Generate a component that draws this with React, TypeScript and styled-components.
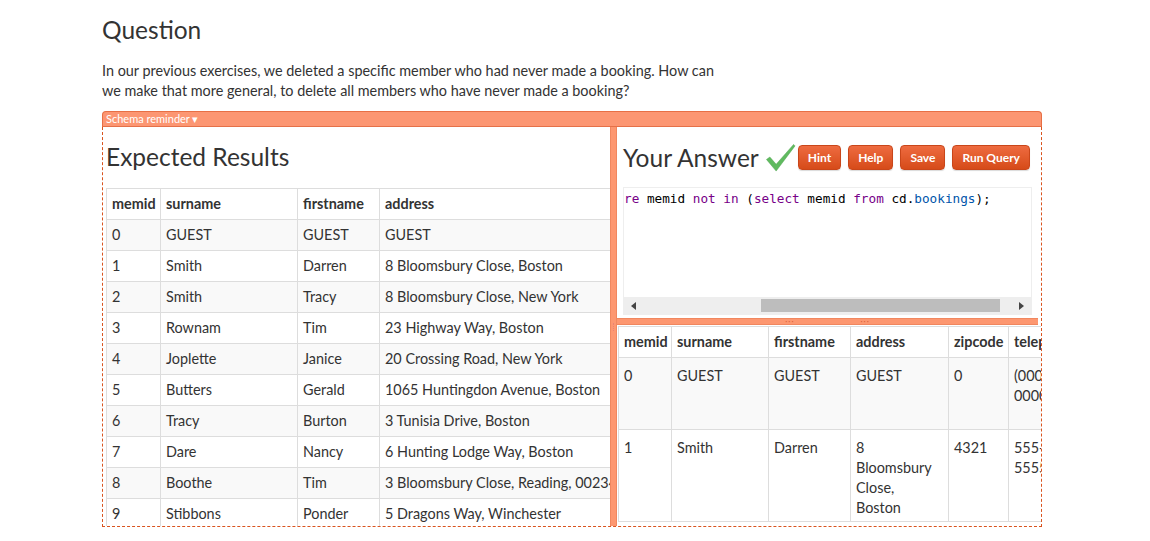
import styled, { createGlobalStyle } from "styled-components";

const GlobalStyle = createGlobalStyle`
  body {
    margin: 0;
    background: #fff;
    font-family: Lato, "Open Sans", sans-serif;
    color: #333;
  }
`;

const expected = [
  ["0", "GUEST", "GUEST", "GUEST"],
  ["1", "Smith", "Darren", "8 Bloomsbury Close, Boston"],
  ["2", "Smith", "Tracy", "8 Bloomsbury Close, New York"],
  ["3", "Rownam", "Tim", "23 Highway Way, Boston"],
  ["4", "Joplette", "Janice", "20 Crossing Road, New York"],
  ["5", "Butters", "Gerald", "1065 Huntingdon Avenue, Boston"],
  ["6", "Tracy", "Burton", "3 Tunisia Drive, Boston"],
  ["7", "Dare", "Nancy", "6 Hunting Lodge Way, Boston"],
  ["8", "Boothe", "Tim", "3 Bloomsbury Close, Reading, 00234"],
  ["9", "Stibbons", "Ponder", "5 Dragons Way, Winchester"],
];

const answer = [
  {
    height: 71,
    cells: ["0", "GUEST", "GUEST", "GUEST", "0", "(000) 000-0000", "", "2012-07-01 00:00:00"],
  },
  {
    height: 91,
    cells: ["1", "Smith", "Darren", "8 Bloomsbury Close, Boston", "4321", "555-555-5555", "", "2012-07-02 12:02:05"],
  },
];

const leftCols = [54, 137, 82, 300];
const rightCols = [53, 97, 82, 98, 60, 90, 120, 90];

const App = () => {
  return (
    <>
      <GlobalStyle />
      <Page>
        <Title>Question</Title>
        <Intro>
          In our previous exercises, we deleted a specific member who had never made a booking. How can
          <br />
          we make that more general, to delete all members who have never made a booking?
        </Intro>
        <SchemaBar>Schema reminder ▾</SchemaBar>
        <Workspace>
          <LeftPane>
            <PaneTitle>Expected Results</PaneTitle>
            <Table>
              <colgroup>
                {leftCols.map((w, i) => (
                  <col key={i} style={{ width: w }} />
                ))}
              </colgroup>
              <thead>
                <tr>
                  <Th>memid</Th>
                  <Th>surname</Th>
                  <Th>firstname</Th>
                  <Th>address</Th>
                </tr>
              </thead>
              <tbody>
                {expected.map((row, i) => (
                  <Tr key={i} $striped={i % 2 === 0}>
                    {row.map((cell, j) => (
                      <Td key={j}>{cell}</Td>
                    ))}
                  </Tr>
                ))}
              </tbody>
            </Table>
          </LeftPane>
          <VSplitter>
            <Grip />
          </VSplitter>
          <RightPane>
            <AnswerHeader>
              <PaneTitle as="span">Your Answer</PaneTitle>
              <Check viewBox="0 0 32 32">
                <path
                  d="M1.5 18 L5 15.5 L11.5 23 L29.5 2.5 L31 4 L11.5 30 Z"
                  fill="#5fba5f"
                  stroke="#4fa44f"
                  strokeWidth="0.5"
                  strokeLinejoin="round"
                />
              </Check>
              <Button>Hint</Button>
              <Button>Help</Button>
              <Button>Save</Button>
              <Button>Run Query</Button>
            </AnswerHeader>
            <Editor>
              <CodeLine>
                <Kw>re</Kw> memid <Kw>not</Kw> <Kw>in</Kw> (<Kw>select</Kw> memid <Kw>from</Kw> cd.
                <Var>bookings</Var>);
              </CodeLine>
              <ScrollBar>
                <Arrow viewBox="0 0 8 10">
                  <path d="M6 1 L1 5 L6 9 Z" fill="#444" />
                </Arrow>
                <Track>
                  <Thumb />
                </Track>
                <Arrow viewBox="0 0 8 10">
                  <path d="M2 1 L7 5 L2 9 Z" fill="#444" />
                </Arrow>
              </ScrollBar>
            </Editor>
            <HSplitter>
              <Dots>···</Dots>
              <Dots>···</Dots>
            </HSplitter>
            <ResultWrap>
              <Table $wide>
                <colgroup>
                  {rightCols.map((w, i) => (
                    <col key={i} style={{ width: w }} />
                  ))}
                </colgroup>
                <thead>
                  <tr>
                    <Th>memid</Th>
                    <Th>surname</Th>
                    <Th>firstname</Th>
                    <Th>address</Th>
                    <Th>zipcode</Th>
                    <Th>telephone</Th>
                    <Th>recommendedby</Th>
                    <Th>joindate</Th>
                  </tr>
                </thead>
                <tbody>
                  {answer.map((row, i) => (
                    <Tr key={i} $striped={i % 2 === 0} style={{ height: row.height }}>
                      {row.cells.map((cell, j) => (
                        <Td key={j} $wrap>
                          {cell}
                        </Td>
                      ))}
                    </Tr>
                  ))}
                </tbody>
              </Table>
            </ResultWrap>
          </RightPane>
        </Workspace>
      </Page>
    </>
  );
};

export default App;

const Page = styled.div`
  width: 940px;
  padding: 14px 0 0 102px;
`;

const Title = styled.h1`
  margin: 0;
  font-size: 24.5px;
  font-weight: 400;
  line-height: 32px;
  color: #333;
`;

const Intro = styled.p`
  margin: 15px 0 10px;
  font-size: 14.4px;
  line-height: 20px;
  color: #333;
`;

const SchemaBar = styled.div`
  height: 14px;
  line-height: 13px;
  padding-left: 3px;
  background: #fc9672;
  border: 1px solid #e76f45;
  border-bottom-color: #e57048;
  border-radius: 4px 4px 0 0;
  color: #fff;
  font-size: 11px;
`;

const Workspace = styled.div`
  display: flex;
  height: 399px;
  border: 1px dashed #d9541f;
  border-top: none;
  overflow: hidden;
`;

const LeftPane = styled.div`
  width: 504px;
  padding-left: 3px;
  overflow: hidden;
  flex-shrink: 0;
`;

const PaneTitle = styled.h2`
  margin: 13px 0 14px;
  font-size: 24.5px;
  font-weight: 400;
  line-height: 34px;
  color: #333;
`;

const Table = styled.table<{ $wide?: boolean }>`
  border-collapse: collapse;
  table-layout: fixed;
  width: ${({ $wide }) => ($wide ? "690px" : "573px")};
  font-size: 14.4px;
  line-height: 20px;
  color: #333;
  border-left: 1px solid #ddd;
`;

const Th = styled.th`
  text-align: left;
  font-weight: 700;
  padding: 5px 5px;
  border: 1px solid #ddd;
  border-left: none;
  white-space: nowrap;
  overflow: hidden;
`;

const Tr = styled.tr<{ $striped: boolean }>`
  background: ${({ $striped }) => ($striped ? "#f9f9f9" : "#fff")};
`;

const Td = styled.td<{ $wrap?: boolean }>`
  vertical-align: top;
  padding: ${({ $wrap }) => ($wrap ? "8px 9px 3px 5px" : "5px 5px")};
  border: 1px solid #ddd;
  border-left: none;
  white-space: ${({ $wrap }) => ($wrap ? "normal" : "nowrap")};
  overflow: hidden;
`;

const VSplitter = styled.div`
  width: 5px;
  flex-shrink: 0;
  background: #fd9770;
  border-left: 1px solid #f0875f;
  border-right: 1px solid #f0875f;
  display: flex;
  align-items: center;
  justify-content: center;
`;

const Grip = styled.div`
  width: 1px;
  height: 8px;
  border-left: 1px dotted #d77;
  opacity: 0.6;
`;

const RightPane = styled.div`
  flex: 1;
  min-width: 0;
  display: flex;
  flex-direction: column;
  overflow: hidden;
`;

const AnswerHeader = styled.div`
  display: flex;
  align-items: center;
  padding: 2px 0 1px 6px;
  height: 57px;
  gap: 7px;

  ${PaneTitle} {
    margin: 0 -1px 0 0;
  }
`;

const Check = styled.svg`
  width: 31px;
  height: 31px;
  margin-right: -5px;
`;

const Button = styled.button`
  height: 25px;
  padding: 0 9px;
  border: 1px solid #c9461a;
  border-radius: 4px;
  background: linear-gradient(#ee6b40, #d64b19);
  color: #fff;
  font-family: Lato, "Open Sans", sans-serif;
  font-size: 12px;
  font-weight: 700;
  box-shadow: 0 1px 1px rgba(0, 0, 0, 0.15);
`;

const Editor = styled.div`
  margin-left: 6px;
  width: 407px;
  height: 126px;
  border: 1px solid #eee;
  display: flex;
  flex-direction: column;
  justify-content: space-between;
  background: #fff;
`;

const CodeLine = styled.div`
  font-family: "DejaVu Sans Mono", monospace;
  font-size: 12.7px;
  line-height: 20px;
  padding-top: 1px;
  color: #000;
  white-space: pre;
`;

const Kw = styled.span`
  color: #770088;
`;

const Var = styled.span`
  color: #0055aa;
`;

const ScrollBar = styled.div`
  height: 17px;
  background: #eee;
  display: flex;
  align-items: center;
  padding: 0 6px;
  gap: 6px;
`;

const Arrow = styled.svg`
  width: 8px;
  height: 10px;
  flex-shrink: 0;
`;

const Track = styled.div`
  flex: 1;
  height: 13px;
  padding-left: 117px;
  padding-right: 11px;
`;

const Thumb = styled.div`
  height: 13px;
  background: #bdbdbd;
`;

const HSplitter = styled.div`
  margin: 3px 3px 1px 0;
  height: 5px;
  background: #fd9770;
  border-top: 1px solid #f0875f;
  border-bottom: 1px solid #f0875f;
  display: flex;
  justify-content: center;
  gap: 66px;
`;

const Dots = styled.span`
  font-size: 8px;
  line-height: 4px;
  color: #d8603a;
  letter-spacing: 1px;
`;

const ResultWrap = styled.div`
  padding-left: 1px;
  overflow: hidden;
`;
